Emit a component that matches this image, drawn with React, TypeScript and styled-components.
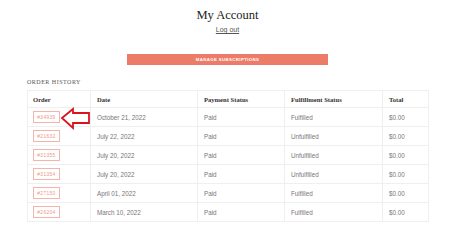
import React from 'react';
import styled, { createGlobalStyle } from 'styled-components';

type Order = {
  id: string;
  date: string;
  payment: string;
  fulfillment: string;
  total: string;
};

const orders: Order[] = [
  { id: '#34939', date: 'October 21, 2022', payment: 'Paid', fulfillment: 'Fulfilled', total: '$0.00' },
  { id: '#21632', date: 'July 22, 2022', payment: 'Paid', fulfillment: 'Unfulfilled', total: '$0.00' },
  { id: '#31355', date: 'July 20, 2022', payment: 'Paid', fulfillment: 'Unfulfilled', total: '$0.00' },
  { id: '#31354', date: 'July 20, 2022', payment: 'Paid', fulfillment: 'Unfulfilled', total: '$0.00' },
  { id: '#27150', date: 'April 01, 2022', payment: 'Paid', fulfillment: 'Fulfilled', total: '$0.00' },
  { id: '#26204', date: 'March 10, 2022', payment: 'Paid', fulfillment: 'Fulfilled', total: '$0.00' },
];

const App: React.FC = () => {
  return (
    <>
      <GlobalStyle />
      <Page>
        <Title>My Account</Title>
        <LogOut href="#">Log out</LogOut>
        <ManageButton>Manage subscriptions</ManageButton>
        <SectionTitle>Order History</SectionTitle>
        <TableWrap>
          <Table>
            <colgroup>
              <col style={{ width: 63 }} />
              <col style={{ width: 107 }} />
              <col style={{ width: 87 }} />
              <col style={{ width: 98 }} />
              <col style={{ width: 46 }} />
            </colgroup>
            <thead>
              <tr>
                <Th>Order</Th>
                <Th>Date</Th>
                <Th>Payment Status</Th>
                <Th>Fulfillment Status</Th>
                <Th>Total</Th>
              </tr>
            </thead>
            <tbody>
              {orders.map((o, i) => (
                <tr key={i}>
                  <Td>
                    <OrderBadge>{o.id}</OrderBadge>
                  </Td>
                  <Td>{o.date}</Td>
                  <Td>{o.payment}</Td>
                  <Td>{o.fulfillment}</Td>
                  <Td>{o.total}</Td>
                </tr>
              ))}
            </tbody>
          </Table>
          <Arrow width="32" height="24" viewBox="0 0 32 24">
            <path
              d="M2 11 L13 2 L13 6 L29 6 L29 16 L13 16 L13 21 Z"
              fill="none"
              stroke="#d8141e"
              strokeWidth="1.8"
              strokeLinejoin="miter"
            />
          </Arrow>
        </TableWrap>
      </Page>
    </>
  );
};

const GlobalStyle = createGlobalStyle`
  body {
    margin: 0;
    background: #fff;
    font-family: "Liberation Sans", Arial, sans-serif;
  }
`;

const Page = styled.div`
  width: 401px;
  margin-left: 27px;
  padding-top: 7px;
  display: flex;
  flex-direction: column;
  align-items: center;
`;

const Title = styled.h1`
  margin: 0;
  font-family: "Liberation Serif", Georgia, serif;
  font-weight: 400;
  font-size: 12.5px;
  line-height: 16px;
  color: #222;
`;

const LogOut = styled.a`
  margin-top: 2px;
  font-size: 7px;
  line-height: 9px;
  color: #555;
  text-decoration: underline;
  text-underline-offset: 1px;
`;

const ManageButton = styled.div`
  margin-top: 20px;
  width: 201px;
  height: 11px;
  background: #ec7b67;
  color: #fff;
  display: flex;
  align-items: center;
  justify-content: center;
  font-size: 4.3px;
  font-weight: 700;
  letter-spacing: 0.4px;
  text-transform: uppercase;
`;

const SectionTitle = styled.h2`
  align-self: flex-start;
  margin: 13px 0 0;
  font-family: "Liberation Serif", Georgia, serif;
  font-weight: 400;
  font-size: 6px;
  line-height: 8px;
  letter-spacing: 0.5px;
  text-transform: uppercase;
  color: #555;
`;

const TableWrap = styled.div`
  position: relative;
  align-self: stretch;
  margin-top: 4px;
`;

const Table = styled.table`
  width: 401px;
  border-collapse: collapse;
  table-layout: fixed;
`;

const Th = styled.th`
  height: 16px;
  padding: 0 6px;
  text-align: left;
  font-family: "Liberation Serif", Georgia, serif;
  font-weight: 700;
  font-size: 6.6px;
  color: #333;
  border: 1px solid #efefef;
  &:first-child {
    padding-left: 5px;
  }
`;

const Td = styled.td`
  height: 18px;
  padding: 0 6px;
  font-size: 6.3px;
  color: #777;
  border: 1px solid #efefef;
  &:first-child {
    padding-left: 5px;
  }
`;

const OrderBadge = styled.span`
  display: inline-flex;
  align-items: center;
  justify-content: center;
  width: 27px;
  height: 12px;
  box-sizing: border-box;
  border: 1px solid #f2b4ab;
  color: #ee9284;
  font-size: 4.8px;
  letter-spacing: 0.4px;
`;

const Arrow = styled.svg`
  position: absolute;
  left: 33px;
  top: 17px;
`;

export default App;
